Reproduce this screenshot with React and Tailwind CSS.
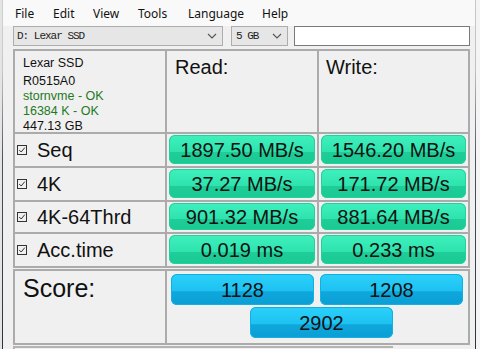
import React from 'react'

const menu = [
  { label: 'File', w: 'w-[38px]' },
  { label: 'Edit', w: 'w-[40px]' },
  { label: 'View', w: 'w-[45px]' },
  { label: 'Tools', w: 'w-[50px]' },
  { label: 'Language', w: 'w-[74px]' },
  { label: 'Help', w: 'w-[40px]' },
]

const rows = [
  { name: 'Seq', read: '1897.50 MB/s', write: '1546.20 MB/s', h: 'h-[32px]' },
  { name: '4K', read: '37.27 MB/s', write: '171.72 MB/s', h: 'h-[32px]' },
  { name: '4K-64Thrd', read: '901.32 MB/s', write: '881.64 MB/s', h: 'h-[30px]' },
  { name: 'Acc.time', read: '0.019 ms', write: '0.233 ms', h: 'h-[32px]' },
]

const Chevron = () => (
  <svg width="10" height="6" viewBox="0 0 10 6" fill="none" stroke="#555" strokeWidth="1.1">
    <path d="M1 1 L5 5 L9 1" />
  </svg>
)

const Check = () => (
  <svg width="10" height="10" viewBox="0 0 10 10" fill="none" stroke="#333" strokeWidth="1">
    <rect x="0.5" y="0.5" width="9" height="9" />
    <path d="M2.2 5 L4.2 7 L7.8 2.6" />
  </svg>
)

const GreenBar = ({ children }) => (
  <div className="h-full rounded-[6px] bg-[linear-gradient(to_bottom,#3ff0bd_0%,#2ee3ae_58%,#1fcd98_60%,#1bc993_100%)] shadow-[inset_0_0_0_1px_#22d29c] flex items-center justify-center text-[20px] text-[#111] leading-none">
    {children}
  </div>
)

const BlueBar = ({ children }) => (
  <div className="w-[143px] h-[31px] rounded-[6px] bg-[linear-gradient(to_bottom,#2bd0fa_0%,#1dc2f2_55%,#0ea7dc_57%,#0b9fd4_100%)] shadow-[inset_0_0_0_1px_#12b0e2] flex items-center justify-center text-[20px] text-[#111] leading-none">
    {children}
  </div>
)

export default function App() {
  return (
    <div className="w-[480px] h-[349px] overflow-hidden flex bg-[#f0f0f0] font-['Liberation_Sans',Arial,sans-serif]">
      <div className="w-[2px] bg-[#e4e4e4]" />
      <div className="w-[1px] bg-[linear-gradient(to_bottom,#d0d0d0_0%,#c8c8c8_20%,#4a5562_45%,#2a3340_100%)]" />
      <div className="flex-1 min-w-0">
        <div className="h-[26px] bg-[#f9f9f9] flex items-center pl-[12px] pt-[1px] font-['Noto_Sans',sans-serif] text-[12px] text-[#111]">
          {menu.map((m) => (
            <span key={m.label} className={m.w}>{m.label}</span>
          ))}
        </div>

        <div className="pl-[10px] flex items-center h-[20px] font-['Liberation_Mono',monospace] text-[11px] text-[#222]">
          <div className="w-[210px] h-[20px] bg-[#e6e6e6] border border-[#adadad] flex items-center justify-between pl-[3px] pr-[5px]">
            <span className="tracking-[-1px]">D: Lexar SSD</span>
            <Chevron />
          </div>
          <div className="ml-[8px] w-[57px] h-[20px] bg-[#e6e6e6] border border-[#adadad] flex items-center justify-between pl-[4px] pr-[5px]">
            <span className="tracking-[-1px]">5 GB</span>
            <Chevron />
          </div>
          <div className="ml-[6px] w-[176px] h-[20px] bg-white border border-[#7a7a7a]" />
        </div>

        <div className="pl-[10px] pt-[3px]">
          <div className="w-[457px] grid grid-cols-[150px_150px_149px] gap-[2px] border-2 border-[#ababab] bg-[#ababab]">
            <div className="h-[81px] bg-[#f0f0f0] pl-[8px] pt-[5px] text-[12.5px] leading-[15px] text-[#111]">
              <div>Lexar SSD</div>
              <div className="mt-[3px]">R0515A0</div>
              <div className="text-[#1e7a1e]">stornvme - OK</div>
              <div className="text-[#1e7a1e]">16384 K - OK</div>
              <div>447.13 GB</div>
            </div>
            <div className="bg-[#f0f0f0] pl-[8px] pt-[5px] text-[20px] leading-[22px] text-[#111]">Read:</div>
            <div className="bg-[#f0f0f0] pl-[7px] pt-[5px] text-[20px] leading-[22px] text-[#111]">Write:</div>

            {rows.map((r) => (
              <React.Fragment key={r.name}>
                <div className={`${r.h} bg-[#f0f0f0] flex items-center pl-[2px] gap-[10px] text-[20px] text-[#111]`}>
                  <Check />
                  <span>{r.name}</span>
                </div>
                <div className={`${r.h} bg-[#f0f0f0] px-[2px] pt-[1px] pb-[2px]`}>
                  <GreenBar>{r.read}</GreenBar>
                </div>
                <div className={`${r.h} bg-[#f0f0f0] px-[2px] pt-[1px] pb-[2px]`}>
                  <GreenBar>{r.write}</GreenBar>
                </div>
              </React.Fragment>
            ))}
          </div>

          <div className="w-[457px] mt-[1px] grid grid-cols-[150px_301px] gap-[2px] border-2 border-[#ababab] bg-[#ababab]">
            <div className="h-[72px] bg-[#f0f0f0] pl-[8px] pt-[2px] text-[25px] leading-[30px] text-[#111]">Score:</div>
            <div className="bg-[#f0f0f0] pt-[3px] pl-[4px] flex flex-col gap-[2px]">
              <div className="flex gap-[6px]">
                <BlueBar>1128</BlueBar>
                <BlueBar>1208</BlueBar>
              </div>
              <div className="pl-[79px]">
                <BlueBar>2902</BlueBar>
              </div>
            </div>
          </div>

          <div className="mt-[1px] w-[380px] h-[6px] border-t-2 border-l-2 border-[#b4b4b4]" />
        </div>
      </div>
      <div className="w-[1px] bg-[linear-gradient(to_bottom,#c8c8c8_0%,#c0c0c0_20%,#4a5562_45%,#2a3340_100%)]" />
      <div className="w-[4px] bg-[#f4f4f4]" />
    </div>
  )
}
